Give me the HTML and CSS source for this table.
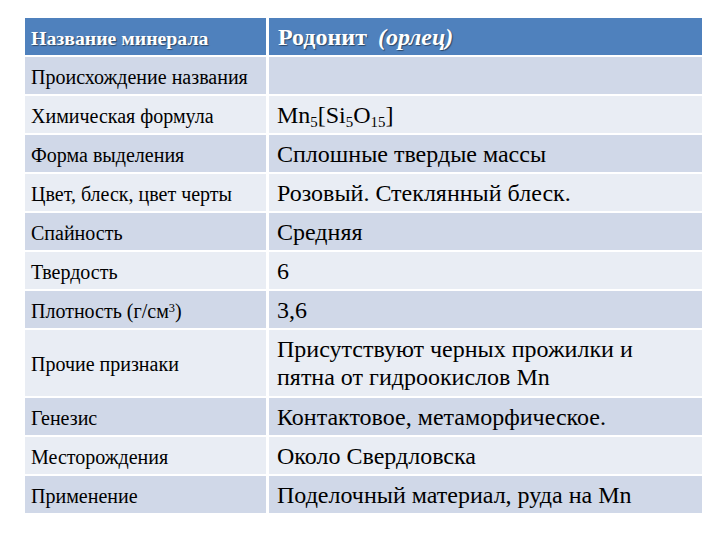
FILE: index.html
```html
<!DOCTYPE html>
<html lang="ru">
<head>
<meta charset="utf-8">
<link rel="stylesheet" href="styles.css">
</head>
<body>
<div class="table">
  <div class="cell head key"><span>Название минерала</span></div>
  <div class="cell head val"><span>Родонит <i>(орлец)</i></span></div>

  <div class="cell dark key"><span>Происхождение названия</span></div>
  <div class="cell dark val"></div>

  <div class="cell light key"><span>Химическая формула</span></div>
  <div class="cell light val"><span>Mn<sub>5</sub>[Si<sub>5</sub>O<sub>15</sub>]</span></div>

  <div class="cell dark key"><span>Форма выделения</span></div>
  <div class="cell dark val"><span>Сплошные твердые массы</span></div>

  <div class="cell light key"><span>Цвет, блеск, цвет черты</span></div>
  <div class="cell light val"><span>Розовый. Стеклянный блеск.</span></div>

  <div class="cell dark key"><span>Спайность</span></div>
  <div class="cell dark val"><span>Средняя</span></div>

  <div class="cell light key"><span>Твердость</span></div>
  <div class="cell light val"><span>6</span></div>

  <div class="cell dark key"><span>Плотность (г/см<sup>3</sup>)</span></div>
  <div class="cell dark val"><span>3,6</span></div>

  <div class="cell light key"><span>Прочие признаки</span></div>
  <div class="cell light val tall"><span>Присутствуют черных прожилки и<br>пятна от гидроокислов Mn</span></div>

  <div class="cell dark key"><span>Генезис</span></div>
  <div class="cell dark val"><span>Контактовое, метаморфическое.</span></div>

  <div class="cell light key"><span>Месторождения</span></div>
  <div class="cell light val"><span>Около Свердловска</span></div>

  <div class="cell dark key"><span>Применение</span></div>
  <div class="cell dark val"><span>Поделочный материал, руда на Mn</span></div>
</div>
</body>
</html>
```
FILE: styles.css
```css
html, body {
  margin: 0;
  padding: 0;
  background: #ffffff;
}
body {
  font-family: "Liberation Serif", "Times New Roman", serif;
  color: #000000;
}
.table {
  margin: 18px 0 0 25px;
  width: 677px;
  display: grid;
  grid-template-columns: 241px 1fr;
  grid-template-rows: repeat(8, 37px) 66px repeat(3, 37px);
  column-gap: 3px;
  row-gap: 2px;
}
.cell {
  display: flex;
  align-items: center;
  white-space: nowrap;
}
.key {
  padding-left: 6px;
  padding-top: 3px;
  font-size: 20px;
}
.val {
  padding-left: 8px;
  padding-top: 1px;
  font-size: 24px;
}
.head {
  background: #4f81bd;
  color: #ffffff;
  font-weight: bold;
  text-shadow: 1px 1px 1px rgba(0, 0, 0, 0.45);
}
.head.key {
  font-size: 19.8px;
}
.head.val {
  font-size: 24px;
  padding-left: 9px;
}
.head i {
  margin-left: 5px;
}
.dark {
  background: #d0d8e8;
}
.light {
  background: #e9edf4;
}
.tall {
  line-height: 1.15;
}
sub {
  font-size: 0.62em;
  vertical-align: -0.3em;
  line-height: 0;
}
sup {
  font-size: 0.62em;
  vertical-align: 0.5em;
  line-height: 0;
}
```
